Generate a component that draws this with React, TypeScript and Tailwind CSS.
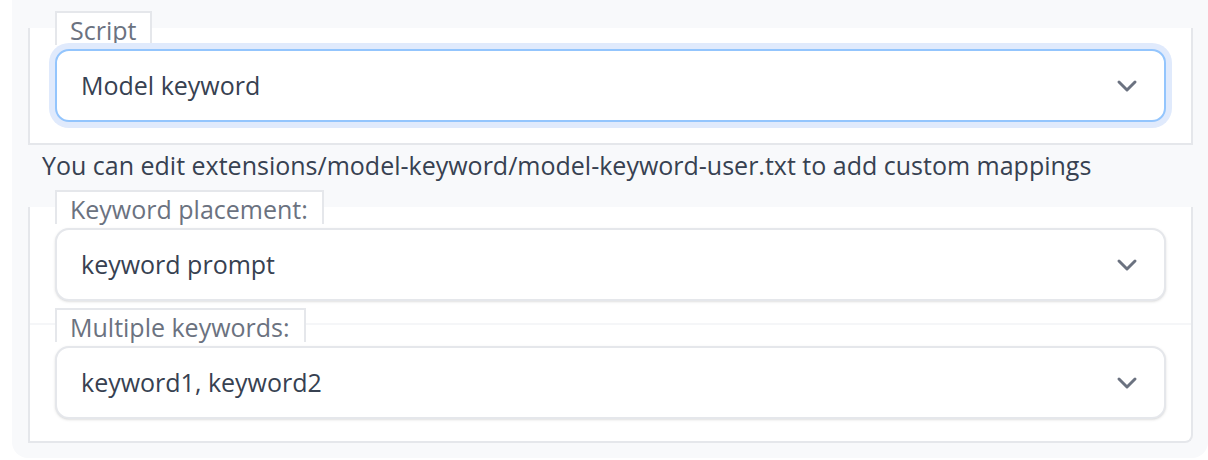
import React from "react";

function Chevron() {
  return (
    <svg width="22" height="14" viewBox="0 0 22 14" fill="none" className="text-[#6b7280]">
      <polyline points="3,3 11,11 19,3" stroke="currentColor" strokeWidth="3" strokeLinecap="round" strokeLinejoin="round" />
    </svg>
  );
}

interface DropdownProps {
  label: string;
  value: string;
  focused?: boolean;
}

function Dropdown({ label, value, focused }: DropdownProps) {
  return (
    <div className="relative">
      <span className="absolute left-0 -top-[38px] flex h-[34px] items-center border-2 border-b-0 border-[#e5e7eb] bg-white pl-[13px] pr-[14px] pt-[2px] text-[25px] leading-none text-[#6b7280]">
        {label}
      </span>
      <div
        className={
          focused
            ? "relative flex h-[73px] items-center justify-between rounded-[14px] border-2 border-[#93c5fd] bg-white pl-[24px] pr-[26px] ring-[6px] ring-[#e0eafc]"
            : "relative flex h-[73px] items-center justify-between rounded-[14px] border-2 border-[#e5e7eb] bg-white pl-[24px] pr-[26px] shadow-sm"
        }
      >
        <span className="text-[25px] leading-none text-[#374151]">{value}</span>
        <Chevron />
      </div>
    </div>
  );
}

export default function App() {
  return (
    <div className="h-[460px] w-[1208px] bg-white pl-[12px] font-['Open_Sans',sans-serif]">
      <div className="h-[458px] w-[1196px] rounded-b-[16px] bg-[#f8f9fb] pl-[16px] pr-[15px] pt-[28px]">
        <div className="border-x-2 border-b-2 border-[#e5e7eb] bg-white px-[25px] pb-[21px] pt-[21px]">
          <Dropdown label="Script" value="Model keyword" focused />
        </div>

        <div className="h-[62px] px-[14px] pt-[4px] text-[25px] leading-[32px] text-[#374151]">
          You can edit extensions/model-keyword/model-keyword-user.txt to add custom mappings
        </div>

        <div className="rounded-br-[8px] border-x-2 border-b-2 border-[#e5e7eb] bg-white">
          <div className="px-[25px] pb-[22px] pt-[21px]">
            <Dropdown label="Keyword placement:" value="keyword prompt" />
          </div>
          <div className="border-t-2 border-[#f5f6f8] px-[25px] pb-[22px] pt-[21px]">
            <Dropdown label="Multiple keywords:" value="keyword1, keyword2" />
          </div>
        </div>
      </div>
    </div>
  );
}
